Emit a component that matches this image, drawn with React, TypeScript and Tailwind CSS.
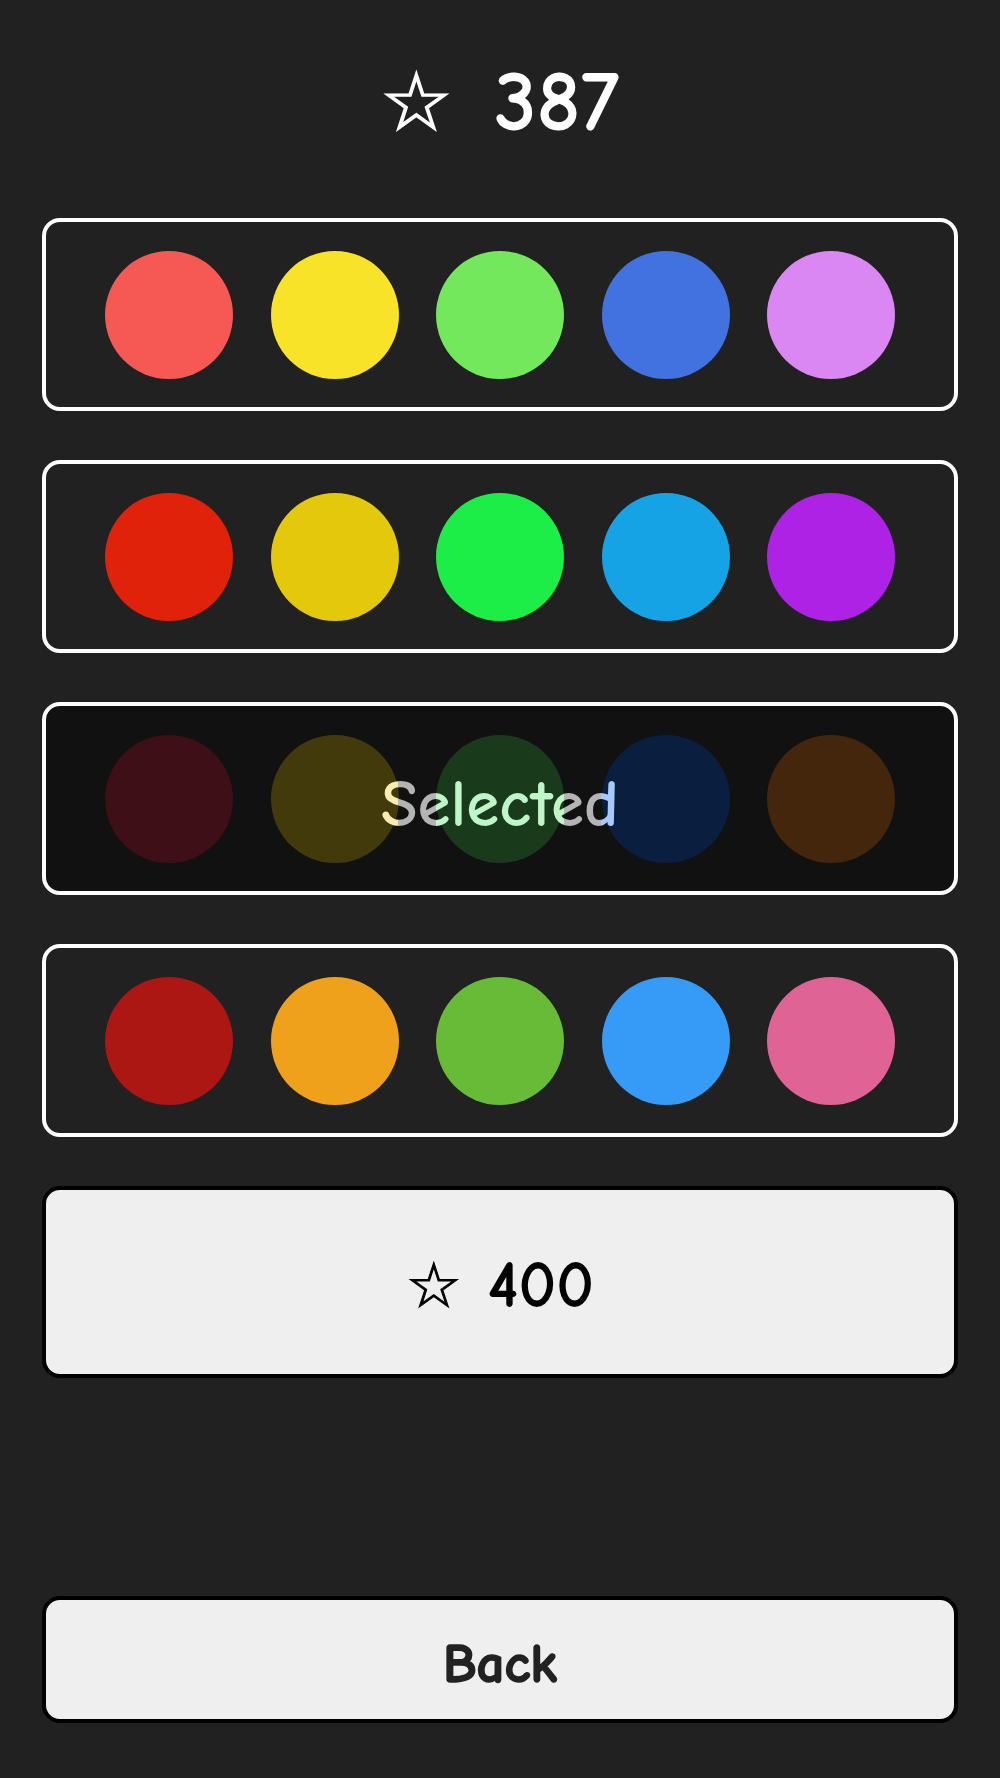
const ROWS: string[][] = [
  ['#f65954', '#f9e328', '#73e85c', '#4272e0', '#da87f4'],
  ['#e0220a', '#e3c80c', '#1ded47', '#15a3e6', '#ae22e6'],
  ['#3e0f17', '#433a0c', '#1a3a1c', '#0a1f40', '#43260c'],
  ['#ac1713', '#efa11b', '#67bb37', '#369bf6', '#e06396'],
];

const font = 'font-["Comic_Sans_MS","Comic_Neue","Open_Sans",sans-serif]';

function Dots({ colors }: { colors: string[] }) {
  return (
    <div className="flex h-full items-center justify-center gap-[37.5px]">
      {colors.map((c) => (
        <div key={c} className="h-[128px] w-[128px] shrink-0 rounded-full" style={{ backgroundColor: c }} />
      ))}
    </div>
  );
}

export default function App() {
  return (
    <div className={`flex min-h-[1778px] w-full flex-col bg-[#212121] px-[42px] ${font}`}>
      <header className="flex h-[200px] items-center justify-center gap-[42px] pt-[6px] text-white">
        <span className="text-[80px] leading-none font-['DejaVu_Sans',sans-serif] [-webkit-text-stroke:1.5px_#fff]">☆</span>
        <span className="text-[86px] leading-none font-bold">387</span>
      </header>

      <div className="mt-[18px] flex flex-col gap-[49px]">
        {ROWS.map((row, i) =>
          i === 2 ? (
            <div key={i} className="relative h-[193px] rounded-[18px] border-4 border-white bg-[#111111]">
              <Dots colors={row} />
              <div className="absolute inset-0 flex items-center justify-center bg-[linear-gradient(to_right,#b4b4b4_224px,#f8ecb0_224px,#f8ecb0_352px,#b4b4b4_352px,#b4b4b4_390px,#bff6c7_390px,#bff6c7_518px,#b4b4b4_518px,#b4b4b4_555px,#a6c8fa_555px,#a6c8fa_683px,#b4b4b4_683px)] bg-clip-text pt-[14px] text-[67px] font-bold text-transparent">
                Selected
              </div>
            </div>
          ) : (
            <div key={i} className="h-[193px] rounded-[18px] border-4 border-white bg-[#212121]">
              <Dots colors={row} />
            </div>
          ),
        )}

        <button className="flex h-[192px] items-center justify-center gap-[26px] rounded-[18px] border-4 border-black bg-[#efefef] pt-[8px] text-black">
          <span className="text-[62px] leading-none font-['DejaVu_Sans',sans-serif] [-webkit-text-stroke:1px_#000]">☆</span>
          <span className="text-[66px] leading-none font-bold">400</span>
        </button>
      </div>

      <button className="mt-auto mb-[55px] flex h-[127px] items-center justify-center rounded-[18px] border-4 border-black bg-[#efefef] pt-[10px] text-[55px] font-bold text-[#222222] [-webkit-text-stroke:1.5px_#222]">
        Back
      </button>
    </div>
  );
}
